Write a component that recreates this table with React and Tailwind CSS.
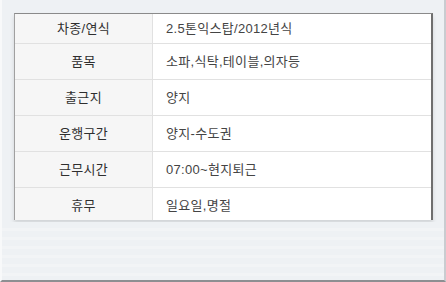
const rows = [
  ['차종/연식', '2.5톤익스탑/2012년식'],
  ['품목', '소파,식탁,테이블,의자등'],
  ['출근지', '양지'],
  ['운행구간', '양지-수도권'],
  ['근무시간', '07:00~현지퇴근'],
  ['휴무', '일요일,명절'],
]

export default function App() {
  return (
    <div
      className="w-[446px] h-[282px] overflow-hidden bg-[#eef1f4] border-l-2 border-l-[#f8f9fa] border-r-2 border-r-[#c9ccd0] border-b-2 border-b-[#8d8f92] pl-[12px] pt-[13px]"
      style={{ fontFamily: '"Liberation Sans", "Noto Sans CJK KR", sans-serif' }}
    >
      {/* scrolled table, clipped at the panel bottom */}
      <div className="w-[419px] h-[207px] overflow-hidden bg-white border-t border-t-[#8a8a8a] border-l border-l-[#a0a0a0] border-r-2 border-r-[#6f6f6f] shadow-[0_3px_4px_rgba(0,0,0,0.12)]">
        {rows.map(([label, value], i) => (
          <div
            key={label}
            className={`flex border-b border-[#e1e1e1] ${i === 0 ? 'h-[30px]' : 'h-[36px]'}`}
          >
            <div className="w-[138px] shrink-0 flex items-center justify-center bg-[#f6f6f6] border-r border-[#e1e1e1] text-[13px] text-[#2e2e2e] tracking-[0.3px]">
              {label}
            </div>
            <div className="flex-1 flex items-center pl-[13px] text-[13px] text-[#444] tracking-[0.3px]">
              {value}
            </div>
          </div>
        ))}
      </div>
      <div className="h-[60px] -ml-[12px] mt-[2px] bg-[repeating-linear-gradient(180deg,#eef1f4_0px,#eef1f4_6px,#f2f4f6_6px,#f2f4f6_9px)]" />
    </div>
  )
}
